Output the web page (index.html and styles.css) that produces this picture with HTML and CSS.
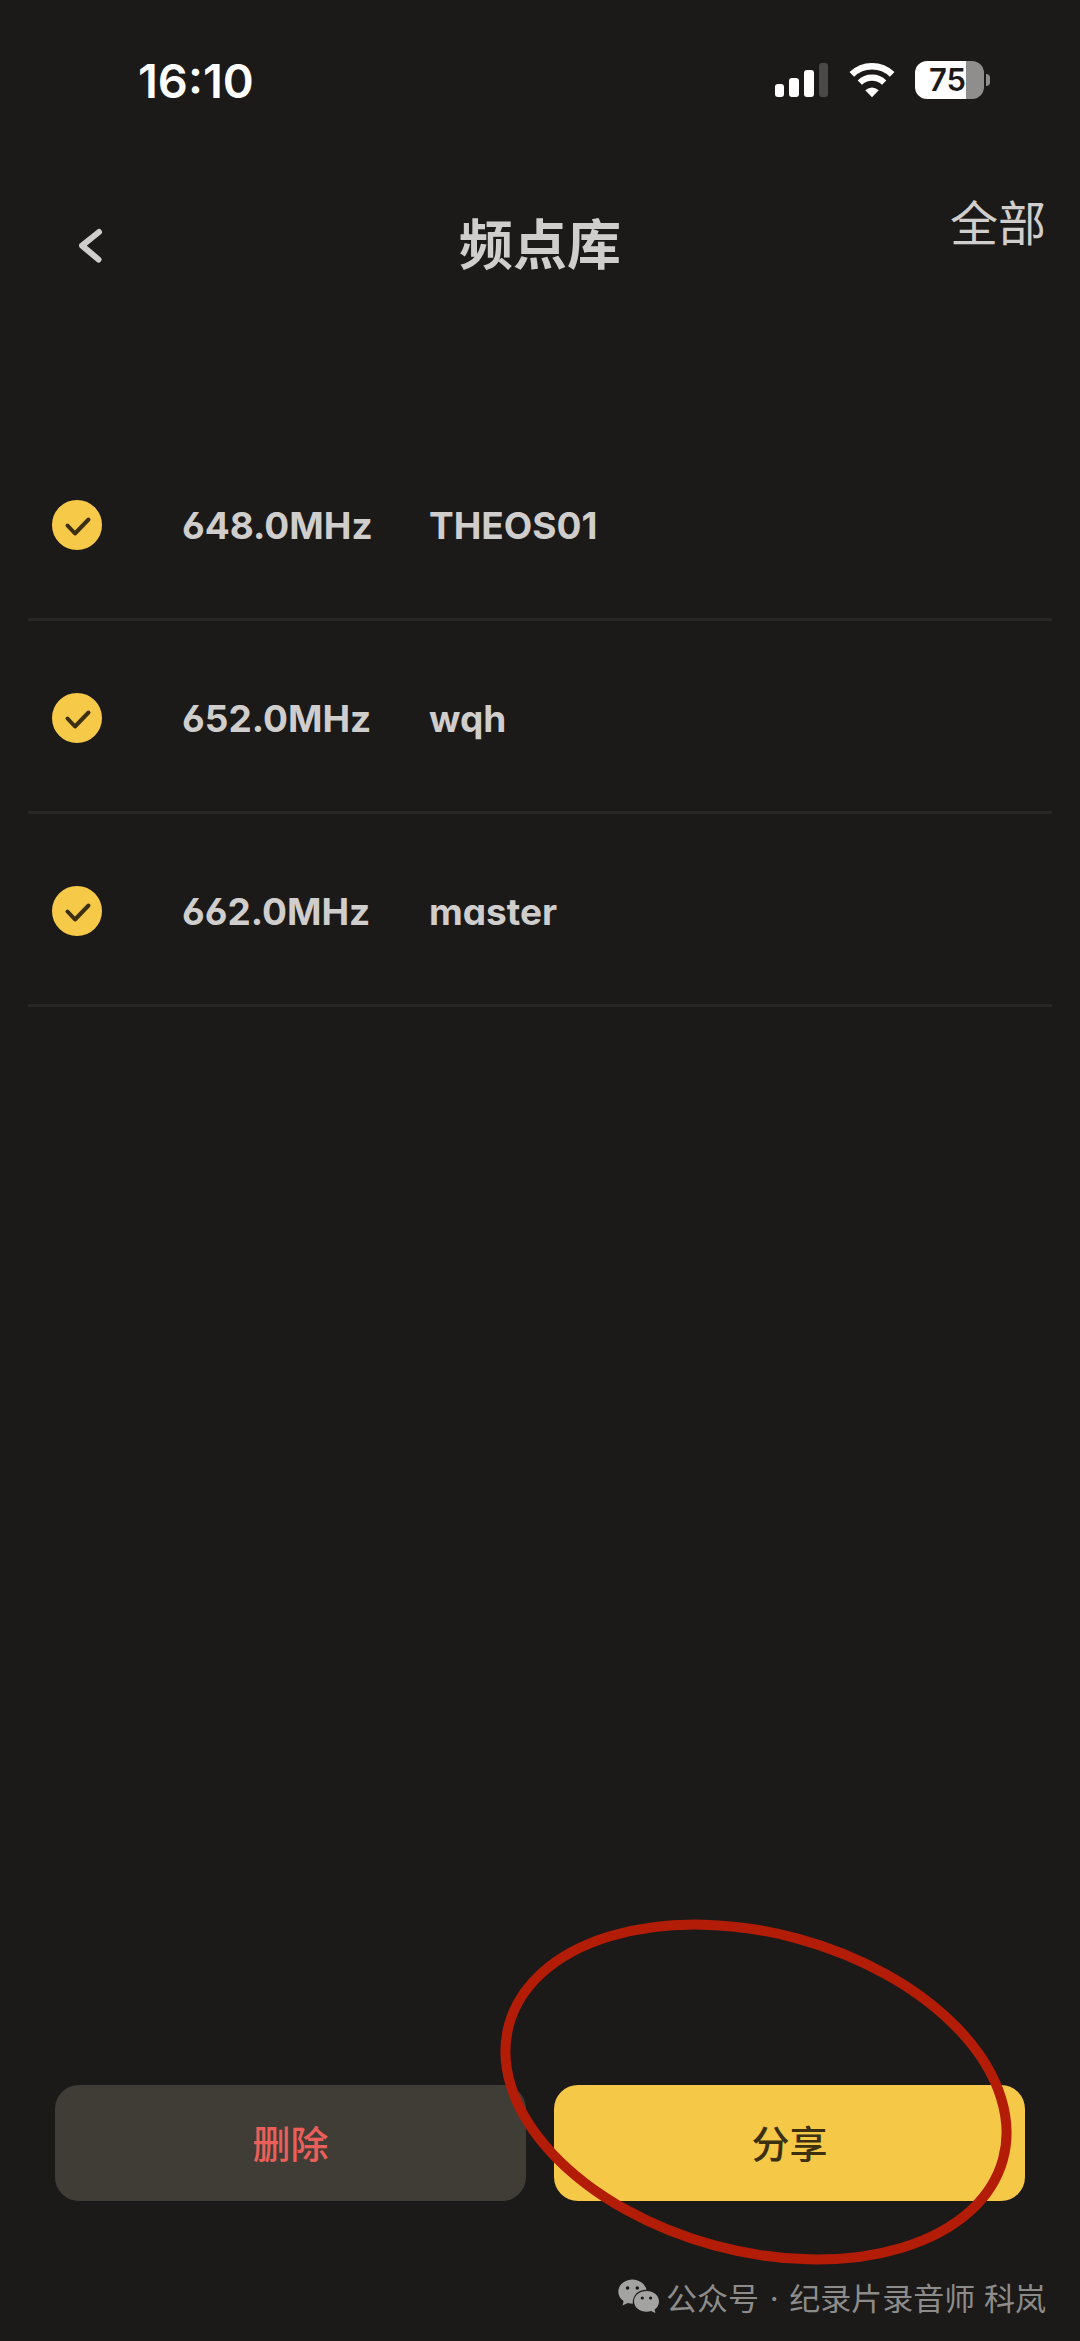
FILE: index.html
```html
<!DOCTYPE html>
<html lang="zh-CN">
<head>
<meta charset="utf-8">
<meta name="viewport" content="width=device-width, initial-scale=1">
<title>频点库</title>
<link rel="stylesheet" href="styles.css">
</head>
<body>
<div class="status-bar">
  <time class="clock">16:10</time>
  <div class="status-icons">
    <svg class="signal" width="54" height="36" viewBox="0 0 54 36" aria-hidden="true">
      <rect x="0" y="22" width="9" height="13" rx="3"/>
      <rect x="14" y="16" width="10" height="19" rx="3"/>
      <rect x="29" y="8" width="10" height="27" rx="3"/>
      <rect class="dim" x="44" y="1" width="9" height="34" rx="3"/>
    </svg>
    <svg class="wifi" width="48" height="36" viewBox="0 0 48 36" aria-hidden="true">
      <path d="M3.8 12.4 A29 29 0 0 1 44.2 12.4" fill="none" stroke="#fff" stroke-width="6.6"/>
      <path d="M11.8 20.6 A17.5 17.5 0 0 1 36.2 20.6" fill="none" stroke="#fff" stroke-width="6.2"/>
      <path d="M24 35.2 L17.3 28.2 Q24 22.6 30.7 28.2 Z"/>
    </svg>
    <div class="battery">
      <span class="battery-body">75</span>
      <span class="battery-tip"></span>
    </div>
  </div>
</div>

<header class="header">
  <button class="back" type="button" aria-label="返回">
    <svg width="24" height="36" viewBox="0 0 24 36" aria-hidden="true"><path d="M20 4 L3 17.6 L19.5 31.5"/></svg>
  </button>
  <h1 class="title">频点库</h1>
  <button class="select-all" type="button">全部</button>
</header>

<main class="main">
  <ul class="list">
    <li>
      <label class="row">
        <span class="check"><input type="checkbox" checked><svg viewBox="0 0 50 50" aria-hidden="true"><path d="M15.5 25.5 L23 33.5 L36.5 19.5"/></svg></span>
        <span class="freq">648.0MHz</span>
        <span class="name">THEOS01</span>
      </label>
    </li>
    <li>
      <label class="row">
        <span class="check"><input type="checkbox" checked><svg viewBox="0 0 50 50" aria-hidden="true"><path d="M15.5 25.5 L23 33.5 L36.5 19.5"/></svg></span>
        <span class="freq">652.0MHz</span>
        <span class="name">wqh</span>
      </label>
    </li>
    <li>
      <label class="row">
        <span class="check"><input type="checkbox" checked><svg viewBox="0 0 50 50" aria-hidden="true"><path d="M15.5 25.5 L23 33.5 L36.5 19.5"/></svg></span>
        <span class="freq">662.0MHz</span>
        <span class="name">master</span>
      </label>
    </li>
  </ul>
</main>

<div class="actions">
  <button class="action delete" type="button">删除</button>
  <div class="share-wrap">
    <button class="action share" type="button">分享</button>
    <svg class="ring" width="520" height="352" viewBox="0 0 520 352" aria-hidden="true">
      <ellipse cx="260" cy="176" rx="256" ry="159" transform="rotate(15.2 260 176)"/>
    </svg>
  </div>
</div>

<footer class="credit">
  <svg width="42" height="34" viewBox="0 0 42 34" aria-hidden="true">
    <path d="M14.5 0.5 C6.6 0.5 0.3 5.9 0.3 12.7 C0.3 16.6 2.3 19.9 5.6 22.1 L4.6 26.6 L9.7 24 C11.3 24.5 13 24.7 14.8 24.7 C14.2 16.5 20.3 10.6 28.6 10.8 C27 4.9 21.3 0.5 14.5 0.5 Z"/>
    <path d="M28.6 12 C21.6 12 16 16.6 16 22.4 C16 28.2 21.6 32.7 28.6 32.7 C30.2 32.7 31.7 32.5 33.1 32 L37.4 34 L36.6 30.4 C39.4 28.5 41 25.6 41 22.4 C41 16.6 35.6 12 28.6 12 Z"/>
    <g class="eyes"><circle cx="9.6" cy="9" r="1.8"/><circle cx="19.3" cy="9" r="1.8"/><circle cx="24.3" cy="19" r="1.6"/><circle cx="32.6" cy="19" r="1.6"/></g>
  </svg>
  <span>公众号 <span class="dot">·</span> 纪录片录音师 科岚</span>
</footer>
</body>
</html>
```
FILE: styles.css
```css
* { box-sizing: border-box; }

body {
  margin: 0;
  min-height: 100vh;
  display: flex;
  flex-direction: column;
  background: #1b1a18;
  color: #d0cecc;
  font-family: Inter, "Noto Sans CJK SC", sans-serif;
}

button {
  margin: 0;
  padding: 0;
  border: 0;
  background: none;
  color: inherit;
  font-family: inherit;
  cursor: pointer;
}

/* Status bar */
.status-bar {
  display: flex;
  align-items: center;
  justify-content: space-between;
  height: 160px;
  padding: 0 90px 0 138px;
  color: #fff;
}
.clock { font-size: 47px; font-weight: 600; }
.status-icons { display: flex; align-items: center; gap: 19px; }
.status-icons svg { fill: #fff; }
.status-icons .dim { fill: #4a4948; }
.battery { display: flex; align-items: center; gap: 2px; }
.battery-body {
  width: 69px;
  height: 38px;
  padding-right: 4px;
  border-radius: 12px;
  background: linear-gradient(to right, #fff 51px, #8f8e8d 51px);
  color: #1b1a18;
  font-size: 31px;
  font-weight: 600;
  line-height: 38px;
  text-align: center;
}
.battery-tip {
  width: 4px;
  height: 12px;
  border-radius: 0 4px 4px 0;
  background: #8f8e8d;
}

/* Header */
.header {
  display: grid;
  grid-template-columns: 1fr auto 1fr;
  align-items: center;
  height: 172px;
  padding: 0 34px;
}
.back { justify-self: start; display: flex; margin-left: 45px; }
.back path {
  fill: none;
  stroke: #d0cecc;
  stroke-width: 6;
  stroke-linecap: round;
  stroke-linejoin: round;
}
.title { margin: 0; font-size: 54px; font-weight: 700; line-height: 80px; }
.select-all {
  justify-self: end;
  align-self: start;
  padding-top: 28px;
  font-size: 48px;
  line-height: 72px;
}

/* Frequency list */
.main { padding: 96px 28px 0; }
.list { margin: 0; padding: 0; list-style: none; }
.row {
  display: grid;
  grid-template-columns: 130px 247px 1fr;
  align-items: center;
  height: 193px;
  padding: 4px 0 0 24px;
  border-bottom: 3px solid #282725;
  font-size: 37px;
  font-weight: 700;
  line-height: 48px;
  font-feature-settings: "cv11", "cv03";
}
.check { display: grid; width: 50px; height: 50px; }
.check input, .check svg { grid-area: 1 / 1; width: 50px; height: 50px; margin: 0; }
.check input {
  appearance: none;
  border: 3px solid #f7c948;
  border-radius: 50%;
}
.check input:checked { background: #f7c948; }
.check svg {
  fill: none;
  stroke: #3c3010;
  stroke-width: 4;
  stroke-linecap: round;
  stroke-linejoin: round;
  pointer-events: none;
}
.freq, .name { padding-top: 2px; }

/* Bottom actions */
.actions {
  display: grid;
  grid-template-columns: 1fr 1fr;
  gap: 28px;
  margin-top: auto;
  padding: 0 55px;
}
.action {
  width: 100%;
  height: 116px;
  padding-bottom: 4px;
  border-radius: 24px;
  font-size: 38px;
  font-weight: 500;
}
.delete { background: #403d36; color: #ea5f5a; }
.share { background: #f6c847; color: #3c3010; }
.share-wrap { position: relative; }
.ring {
  position: absolute;
  top: -169px;
  left: -58px;
  pointer-events: none;
}
.ring ellipse { fill: none; stroke: #b31c06; stroke-width: 10; }

/* Account credit */
.credit {
  display: flex;
  align-items: center;
  justify-content: flex-end;
  gap: 6px;
  height: 140px;
  padding: 50px 34px 0 0;
  color: #8d8c8b;
  font-size: 31px;
}
.credit svg { fill: #a3a4a2; }
.credit .eyes { fill: #1b1a18; }
.dot { padding: 0 2px; }
```
